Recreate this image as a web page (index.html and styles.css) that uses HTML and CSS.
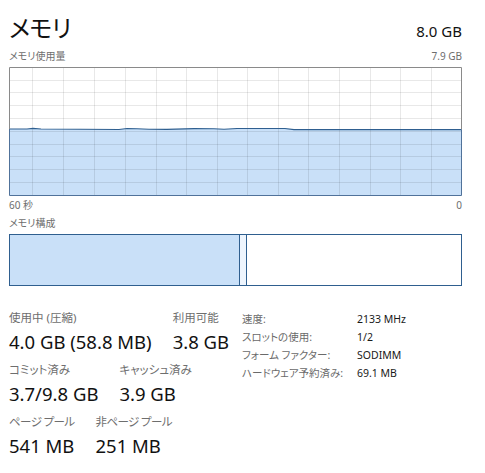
FILE: index.html
```html
<!DOCTYPE html>
<html lang="ja">
<head>
<meta charset="utf-8">
<link rel="stylesheet" href="styles.css">
</head>
<body>
<div class="page">
  <div class="header">
    <div class="title">メモリ</div>
    <div class="total">8.0 GB</div>
  </div>
  <div class="caption-row">
    <span>メモリ使用量</span>
    <span>7.9 GB</span>
  </div>
  <div class="graph">
    <svg width="453" height="129" viewBox="0 0 453 129">
      <rect x="0" y="0" width="453" height="129" fill="#fff"/>
      <path d="M0.5,62 L18,62 L24,61.4 L32,62 L110,62.5 L118,61.5 L128,61.7 L140,62.3 L158,62.4 L185,61.6 L205,61.7 L215,62.3 L228,61.5 L260,61.5 L276,61.5 L285,62.6 L452.5,62.6 L452.5,128.5 L0.5,128.5 Z" fill="#c9e0f8"/>
      <g stroke="rgba(0,0,0,0.09)" stroke-width="1">
        <line x1="23.5" y1="0" x2="23.5" y2="129"/>
        <line x1="54.5" y1="0" x2="54.5" y2="129"/>
        <line x1="85.5" y1="0" x2="85.5" y2="129"/>
        <line x1="116.5" y1="0" x2="116.5" y2="129"/>
        <line x1="147.5" y1="0" x2="147.5" y2="129"/>
        <line x1="177.5" y1="0" x2="177.5" y2="129"/>
        <line x1="208.5" y1="0" x2="208.5" y2="129"/>
        <line x1="238.5" y1="0" x2="238.5" y2="129"/>
        <line x1="269.5" y1="0" x2="269.5" y2="129"/>
        <line x1="299.5" y1="0" x2="299.5" y2="129"/>
        <line x1="330.5" y1="0" x2="330.5" y2="129"/>
        <line x1="361.5" y1="0" x2="361.5" y2="129"/>
        <line x1="391.5" y1="0" x2="391.5" y2="129"/>
        <line x1="422.5" y1="0" x2="422.5" y2="129"/>
        <line x1="0" y1="13.5" x2="453" y2="13.5"/>
        <line x1="0" y1="25.5" x2="453" y2="25.5"/>
        <line x1="0" y1="38.5" x2="453" y2="38.5"/>
        <line x1="0" y1="51.5" x2="453" y2="51.5"/>
        <line x1="0" y1="64.5" x2="453" y2="64.5"/>
        <line x1="0" y1="77.5" x2="453" y2="77.5"/>
        <line x1="0" y1="89.5" x2="453" y2="89.5"/>
        <line x1="0" y1="102.5" x2="453" y2="102.5"/>
        <line x1="0" y1="115.5" x2="453" y2="115.5"/>
      </g>
      <path d="M0.5,62 L18,62 L24,61.4 L32,62 L110,62.5 L118,61.5 L128,61.7 L140,62.3 L158,62.4 L185,61.6 L205,61.7 L215,62.3 L228,61.5 L260,61.5 L276,61.5 L285,62.6 L452.5,62.6" fill="none" stroke="#2f5f90" stroke-width="1.1"/>
      <path d="M0.5,62 L0.5,0.5 L452.5,0.5 L452.5,62.6" fill="none" stroke="#8a8a8a" stroke-width="1"/>
      <path d="M0.5,62 L0.5,128.5 L452.5,128.5 L452.5,62.6" fill="none" stroke="#50729a" stroke-width="1"/>
    </svg>
  </div>
  <div class="axis-row">
    <span>60 秒</span>
    <span>0</span>
  </div>
  <div class="caption-row caption-comp">
    <span>メモリ構成</span>
  </div>
  <div class="comp-bar">
    <div class="seg seg-used"></div>
    <div class="seg seg-mod"></div>
    <div class="seg seg-free"></div>
  </div>

  <div class="stats">
    <div class="stats-left">
      <div class="stat-row">
        <div class="stat">
          <div class="stat-label">使用中 (圧縮)</div>
          <div class="stat-value">4.0 GB (58.8 MB)</div>
        </div>
        <div class="stat">
          <div class="stat-label">利用可能</div>
          <div class="stat-value">3.8 GB</div>
        </div>
      </div>
      <div class="stat-row">
        <div class="stat">
          <div class="stat-label">コミット済み</div>
          <div class="stat-value">3.7/9.8 GB</div>
        </div>
        <div class="stat">
          <div class="stat-label">キャッシュ済み</div>
          <div class="stat-value">3.9 GB</div>
        </div>
      </div>
      <div class="stat-row">
        <div class="stat">
          <div class="stat-label tight">ページ プール</div>
          <div class="stat-value">541 MB</div>
        </div>
        <div class="stat">
          <div class="stat-label tight">非ページ プール</div>
          <div class="stat-value">251 MB</div>
        </div>
      </div>
    </div>
    <div class="stats-right">
      <div class="info-label">速度:</div><div class="info-value">2133 MHz</div>
      <div class="info-label">スロットの使用:</div><div class="info-value">1/2</div>
      <div class="info-label">フォーム ファクター:</div><div class="info-value">SODIMM</div>
      <div class="info-label">ハードウェア予約済み:</div><div class="info-value">69.1 MB</div>
    </div>
  </div>
</div>
</body>
</html>
```

FILE: styles.css
```css
html, body {
  margin: 0;
  padding: 0;
  background: #ffffff;
}

body {
  font-family: "Noto Sans", "Noto Sans CJK JP", sans-serif;
  font-feature-settings: "palt";
  color: #1a1a1a;
}

.page {
  width: 453px;
  padding: 4px 23px 0 9px;
}

.header {
  height: 44px;
  display: flex;
  justify-content: space-between;
  align-items: baseline;
}

.title {
  font-size: 24px;
  line-height: 48px;
  letter-spacing: -0.5px;
  color: #111;
}

.total {
  font-size: 15px;
  color: #111;
}

.caption-row {
  display: flex;
  justify-content: space-between;
  font-size: 10px;
  line-height: 16px;
  color: #6e6e6e;
  margin-bottom: 3px;
}

.graph {
  height: 129px;
  line-height: 0;
}

.graph svg {
  display: block;
}

.axis-row {
  display: flex;
  justify-content: space-between;
  font-size: 10px;
  line-height: 16px;
  color: #6e6e6e;
  margin-top: 1px;
}

.caption-comp {
  margin-top: 2px;
  margin-bottom: 3px;
}

.comp-bar {
  height: 50px;
  border: 1px solid #2f5f8f;
  display: flex;
}

.seg {
  height: 100%;
}

.seg-used {
  width: 229px;
  background: #c9e0f8;
  border-right: 1px solid #2f5f8f;
}

.seg-mod {
  width: 6px;
  background: #eef5fd;
  border-right: 1px solid #2f5f8f;
}

.seg-free {
  flex: 1;
  background: #ffffff;
}

.stats {
  display: flex;
  margin-top: 24px;
}

.stats-left {
  width: 233px;
  display: flex;
  flex-direction: column;
  gap: 8px;
}

.stat-row {
  display: flex;
  gap: 21px;
}

.stat-label {
  font-size: 11.5px;
  line-height: 16px;
  color: #6e6e6e;
}

.stat-label.tight {
  letter-spacing: -0.6px;
}

.stat-value {
  font-size: 18.5px;
  line-height: 24px;
  margin-top: 4px;
  color: #111;
}

.stats-right {
  display: grid;
  grid-template-columns: 115px auto;
  grid-auto-rows: 18px;
  align-content: start;
  font-size: 10.5px;
  line-height: 18px;
  margin-top: 0;
}

.info-label {
  color: #6a6a6a;
}

.info-value {
  color: #1a1a1a;
}
```
